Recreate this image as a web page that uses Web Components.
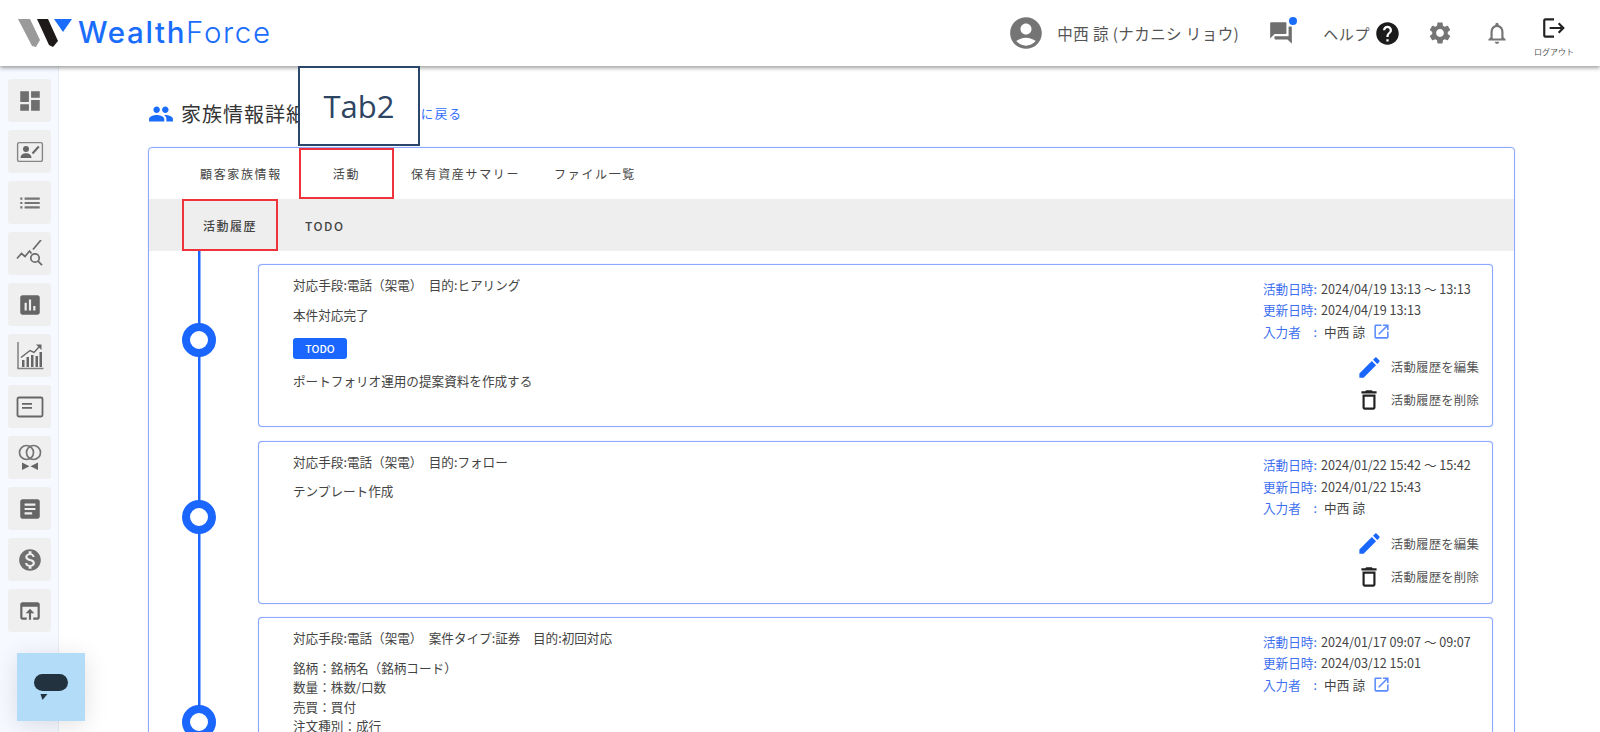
<!DOCTYPE html>
<html lang="ja">
<head>
<meta charset="utf-8">
<title>WealthForce</title>
<style>
  html, body { margin: 0; height: 732px; overflow: hidden; background: #fff; }
  body { font-family: "Noto Sans CJK JP", "Noto Sans", sans-serif; color: #444; }
</style>
</head>
<body>
<wf-app>
  <wf-header slot="header"></wf-header>
  <wf-sidebar slot="sidebar"></wf-sidebar>
  <wf-page-title link="一覧に戻る">家族情報詳細</wf-page-title>
  <wf-panel>
    <wf-tabs>
      <wf-tab>顧客家族情報</wf-tab>
      <wf-tab marked>活動</wf-tab>
      <wf-tab>保有資産サマリー</wf-tab>
      <wf-tab>ファイル一覧</wf-tab>
    </wf-tabs>
    <wf-subtabs>
      <wf-tab sub marked>活動履歴</wf-tab>
      <wf-tab sub>TODO</wf-tab>
    </wf-subtabs>
    <wf-timeline>
      <wf-activity heading="対応手段:電話（架電）　目的:ヒアリング" date="2024/04/19 13:13 ～ 13:13" updated="2024/04/19 13:13" link>
        <p>本件対応完了</p>
        <wf-badge>TODO</wf-badge>
        <p>ポートフォリオ運用の提案資料を作成する</p>
      </wf-activity>
      <wf-activity heading="対応手段:電話（架電）　目的:フォロー" date="2024/01/22 15:42 ～ 15:42" updated="2024/01/22 15:43">
        <p>テンプレート作成</p>
      </wf-activity>
      <wf-activity heading="対応手段:電話（架電）　案件タイプ:証券　目的:初回対応" date="2024/01/17 09:07 ～ 09:07" updated="2024/03/12 15:01" link tall>
        <p class="row">銘柄：銘柄名（銘柄コード）</p>
        <p class="row">数量：株数/口数</p>
        <p class="row">売買：買付</p>
        <p class="row">注文種別：成行</p>
      </wf-activity>
    </wf-timeline>
  </wf-panel>
  <wf-callout slot="overlay">Tab2</wf-callout>
  <wf-chat-button slot="overlay"></wf-chat-button>
</wf-app>

<script>
// material style icon paths, all on a 24 box
const ICONS = {
  dashboard: 'M3 13h8V3H3v10zm0 8h8v-6H3v6zm10 0h8V11h-8v10zm0-18v6h8V3h-8z',
  list: 'M3 13h2v-2H3v2zm0 4h2v-2H3v2zm0-8h2V7H3v2zm4 4h14v-2H7v2zm0 4h14v-2H7v2zM7 7v2h14V7H7z',
  assessment: 'M19 3H5c-1.1 0-2 .9-2 2v14c0 1.1.9 2 2 2h14c1.1 0 2-.9 2-2V5c0-1.1-.9-2-2-2zM9 17H7v-7h2v7zm4 0h-2V7h2v10zm4 0h-2v-4h2v4z',
  article: 'M19 3H5c-1.1 0-2 .9-2 2v14c0 1.1.9 2 2 2h14c1.1 0 2-.9 2-2V5c0-1.1-.9-2-2-2zm-5 14H7v-2h7v2zm3-4H7v-2h10v2zm0-4H7V7h10v2z',
  money: 'M12 2C6.48 2 2 6.48 2 12s4.48 10 10 10 10-4.48 10-10S17.52 2 12 2zm1.41 16.09V20h-2.67v-1.93c-1.71-.36-3.16-1.46-3.27-3.4h1.96c.1 1.05.82 1.87 2.65 1.87 1.96 0 2.4-.98 2.4-1.59 0-.83-.44-1.61-2.67-2.14-2.48-.6-4.18-1.62-4.18-3.67 0-1.72 1.39-2.84 3.11-3.21V4h2.67v1.95c1.86.45 2.79 1.86 2.85 3.39H14.3c-.05-1.11-.64-1.87-2.22-1.87-1.5 0-2.4.68-2.4 1.64 0 .84.65 1.39 2.67 1.91s4.18 1.39 4.18 3.91c-.01 1.83-1.38 2.83-3.12 3.16z',
  upload: 'M19 4H5c-1.11 0-2 .9-2 2v12c0 1.1.89 2 2 2h4v-2H5V8h14v10h-4v2h4c1.1 0 2-.9 2-2V6c0-1.1-.89-2-2-2zm-7 6l-4 4h3v6h2v-6h3l-4-4z',
  people: 'M16 11c1.66 0 2.99-1.34 2.99-3S17.66 5 16 5c-1.66 0-3 1.34-3 3s1.34 3 3 3zm-8 0c1.66 0 2.99-1.34 2.99-3S9.66 5 8 5C6.34 5 5 6.34 5 8s1.34 3 3 3zm0 2c-2.33 0-7 1.17-7 3.5V19h14v-2.5c0-2.33-4.67-3.5-7-3.5zm8 0c-.29 0-.62.02-.97.05 1.16.84 1.97 1.97 1.97 3.45V19h6v-2.5c0-2.33-4.67-3.5-7-3.5z',
  account: 'M12 2C6.48 2 2 6.48 2 12s4.48 10 10 10 10-4.48 10-10S17.52 2 12 2zm0 4c1.93 0 3.5 1.57 3.5 3.5S13.93 13 12 13s-3.5-1.57-3.5-3.5S10.07 6 12 6zm0 14c-2.03 0-4.43-.82-6.14-2.88C7.55 15.8 9.68 15 12 15s4.45.8 6.14 2.12C16.43 19.18 14.03 20 12 20z',
  forum: 'M21 6h-2v9H6v2c0 .55.45 1 1 1h11l4 4V7c0-.55-.45-1-1-1zm-4 6V3c0-.55-.45-1-1-1H3c-.55 0-1 .45-1 1v14l4-4h10c.55 0 1-.45 1-1z',
  help: 'M12 2C6.48 2 2 6.48 2 12s4.48 10 10 10 10-4.48 10-10S17.52 2 12 2zm1 17h-2v-2h2v2zm2.07-7.75l-.9.92C13.45 12.9 13 13.5 13 15h-2v-.5c0-1.1.45-2.1 1.17-2.83l1.24-1.26c.37-.36.59-.86.59-1.41 0-1.1-.9-2-2-2s-2 .9-2 2H8c0-2.21 1.79-4 4-4s4 1.79 4 4c0 .88-.36 1.68-.93 2.25z',
  settings: 'M19.14 12.94c.04-.3.06-.61.06-.94 0-.32-.02-.64-.07-.94l2.03-1.58c.18-.14.23-.41.12-.61l-1.92-3.32c-.12-.22-.37-.29-.59-.22l-2.39.96c-.5-.38-1.03-.7-1.62-.94l-.36-2.54c-.04-.24-.24-.41-.48-.41h-3.84c-.24 0-.43.17-.47.41l-.36 2.54c-.59.24-1.13.57-1.62.94l-2.39-.96c-.22-.08-.47 0-.59.22L2.74 8.87c-.12.21-.08.47.12.61l2.03 1.58c-.05.3-.09.63-.09.94s.02.64.07.94l-2.03 1.58c-.18.14-.23.41-.12.61l1.92 3.32c.12.22.37.29.59.22l2.39-.96c.5.38 1.03.7 1.62.94l.36 2.54c.05.24.24.41.48.41h3.84c.24 0 .44-.17.47-.41l.36-2.54c.59-.24 1.13-.56 1.62-.94l2.39.96c.22.08.47 0 .59-.22l1.92-3.32c.12-.22.07-.47-.12-.61l-2.01-1.58zM12 15.6c-1.98 0-3.6-1.62-3.6-3.6s1.62-3.6 3.6-3.6 3.6 1.62 3.6 3.6-1.62 3.6-3.6 3.6z',
  bell: 'M12 22c1.1 0 2-.9 2-2h-4c0 1.1.9 2 2 2zm6-6v-5c0-3.07-1.63-5.64-4.5-6.32V4c0-.83-.67-1.5-1.5-1.5s-1.5.67-1.5 1.5v.68C7.64 5.36 6 7.92 6 11v5l-2 2v1h16v-1l-2-2zm-2 1H8v-6c0-2.48 1.51-4.5 4-4.5s4 2.02 4 4.5v6z',
  logout: 'M17 7l-1.41 1.41L18.17 11H8v2h10.17l-2.58 2.58L17 17l5-5zM4 5h8V3H4c-1.1 0-2 .9-2 2v14c0 1.1.9 2 2 2h8v-2H4V5z',
  edit: 'M3 17.25V21h3.75L17.81 9.94l-3.75-3.75L3 17.25zM20.71 7.04c.39-.39.39-1.02 0-1.41l-2.34-2.34c-.39-.39-1.02-.39-1.41 0l-1.83 1.83 3.75 3.75 1.83-1.83z',
  trash: 'M6 19c0 1.1.9 2 2 2h8c1.1 0 2-.9 2-2V7H6v12zM8 9h8v10H8V9zm7.5-5l-1-1h-5l-1 1H5v2h14V4z',
  open: 'M19 19H5V5h7V3H5c-1.11 0-2 .9-2 2v14c0 1.1.89 2 2 2h14c1.1 0 2-.9 2-2v-7h-2v7zM14 3v2h3.59l-9.83 9.83 1.41 1.41L19 6.41V10h2V3h-7z'
};

function icon(name, size, color) {
  return `<svg width="${size}" height="${size}" viewBox="0 0 24 24" fill="${color}" style="display:block;flex:none"><path d="${ICONS[name]}"/></svg>`;
}

// the few sidebar icons that are not stock material shapes
const SIDE_CUSTOM = {
  contact: `<svg width="28" height="28" viewBox="0 0 28 28" style="display:block"><rect x="1.6" y="4.6" width="24.8" height="18.8" rx="1.5" fill="none" stroke="#858585" stroke-width="1.4"/><circle cx="10" cy="11" r="3" fill="#666"/><path d="M4.5 20c0-3.400 3-4.800 5.500-4.800s5.500 1.400 5.500 4.800z" fill="#666"/><path d="M16.500 15.500L22.800 8.500" stroke="#666" stroke-width="2"/></svg>`,
  stats: `<svg width="28" height="28" viewBox="0 0 28 28" fill="none" stroke="#6a6a6a" stroke-width="1.700" style="display:block"><path d="M1 18.500l4.500-5 3.500 3 4.500-5.500 2 2.500"/><path d="M17 9.500L25 0"/><circle cx="19" cy="18" r="4.200"/><path d="M22 21.200l4 4"/></svg>`,
  chart: `<svg width="28" height="30" viewBox="0 0 28 30" style="display:block"><path d="M2 1v26.500h25.500" fill="none" stroke="#808080" stroke-width="1.500"/><path d="M6 19h2.500v7H6zM10.500 16H13v10h-2.500zM15 14h2.500v12H15zM19.500 15H22v11h-2.500zM23.500 11H26v15h-2.500z" fill="#666"/><path d="M5 16.500L14 9.500l4 2 5-5.500" fill="none" stroke="#666" stroke-width="1.400"/><path d="M20 3.500h5.500V9z" fill="#666"/></svg>`,
  memo: `<svg width="28" height="28" viewBox="0 0 28 28" style="display:block"><rect x="1.500" y="4.500" width="25" height="19" rx="1.500" fill="none" stroke="#666" stroke-width="1.800"/><path d="M6 10h10v1.800H6zM6 14h10v1.800H6z" fill="#666"/></svg>`,
  rings: `<svg width="28" height="30" viewBox="0 0 28 30" fill="none" stroke="#757575" stroke-width="1.700" style="display:block"><circle cx="10.500" cy="9.500" r="7"/><circle cx="17.500" cy="9.500" r="7"/><path d="M6 19.500l7.500 3.800L6 27zM22 19.500l-7.500 3.800L22 27z" fill="#666" stroke="none"/></svg>`
};

class WfApp extends HTMLElement {
  constructor() {
    super();
    this.attachShadow({mode: 'open'}).innerHTML = `
      <style>
        :host { display: block; position: relative; width: 1600px; height: 732px; overflow: hidden; }
        .shell { display: grid; grid-template-rows: 66px 666px; grid-template-columns: 59px 1fr; height: 732px; }
        .top { grid-column: 1 / 3; position: relative; z-index: 2; }
        main { padding: 0 85px 0 89px; overflow: hidden; }
      </style>
      <div class="shell">
        <div class="top"><slot name="header"></slot></div>
        <slot name="sidebar"></slot>
        <main><slot></slot></main>
      </div>
      <slot name="overlay"></slot>`;
  }
}

class WfHeader extends HTMLElement {
  constructor() {
    super();
    this.attachShadow({mode: 'open'}).innerHTML = `
      <style>
        :host { display: flex; align-items: center; height: 66px; background: #fff; box-shadow: 0 2px 4px rgba(0,0,0,.38); }
        .logo { display: flex; align-items: center; margin-left: 17px; }
        .brand { margin-left: 5px; font: 300 29.500px/1 Inter, sans-serif; color: #1a6dfb; letter-spacing: 1.650px; white-space: nowrap; }
        .brand b { font-weight: 500; }
        .right { margin-left: auto; display: flex; align-items: center; }
        .user { font-size: 15.500px; color: #555; margin: 0 29px 0 12px; letter-spacing: .4px; white-space: nowrap; }
        .chat { position: relative; }
        .chat i { position: absolute; top: -3px; right: -3px; width: 8px; height: 8px; border-radius: 50%; background: #1a6dfb; }
        .help { font-size: 15px; color: #555; margin-left: 29px; margin-right: 4px; letter-spacing: .6px; }
        .out { display: flex; flex-direction: column; align-items: center; width: 42px; margin: 0 25px 0 23px; font-size: 8px; line-height: 10px; color: #555; white-space: nowrap; padding-top: 6px; }
        .out span { margin-top: 6px; }
        .gear { margin-left: 26px; }
        .bell { margin-left: 31px; }
      </style>
      <div class="logo">
        <svg width="56" height="30" viewBox="0 0 56 30" style="display:block">
          <path d="M1 1h12l10 21-4 7-4-1z" fill="#9a9a9a"/>
          <path d="M20 1h11l10 22-5 6-4-2z" fill="#1f1a1a"/>
          <path d="M37 1h18l-9 13z" fill="#1a6dfb"/>
        </svg>
        <div class="brand"><b>Wealth</b>Force</div>
      </div>
      <div class="right">
        ${icon('account', 38, '#757575')}
        <div class="user">中西 諒 (ナカニシ リョウ)</div>
        <div class="chat">${icon('forum', 26, '#6f6f6f')}<i></i></div>
        <div class="help">ヘルプ</div>
        ${icon('help', 27, '#1c1c1c')}
        <div class="gear">${icon('settings', 26, '#757575')}</div>
        <div class="bell">${icon('bell', 26, '#757575')}</div>
        <div class="out">${icon('logout', 26, '#222')}<span>ログアウト</span></div>
      </div>`;
  }
}

class WfSidebar extends HTMLElement {
  constructor() {
    super();
    const items = [
      icon('dashboard', 26, '#6f6f6f'), SIDE_CUSTOM.contact, icon('list', 26, '#757575'),
      SIDE_CUSTOM.stats, icon('assessment', 26, '#666'), SIDE_CUSTOM.chart, SIDE_CUSTOM.memo,
      SIDE_CUSTOM.rings, icon('article', 26, '#666'), icon('money', 26, '#6f6f6f'), icon('upload', 26, '#666')
    ];
    this.attachShadow({mode: 'open'}).innerHTML = `
      <style>
        :host { display: flex; flex-direction: column; gap: 8px; box-sizing: border-box; padding: 13px 8px 0; background: #f6f9ff; border-right: 1px solid #e8edf6; }
        div { width: 43px; height: 43px; flex: none; background: #efefef; border-radius: 3px; display: flex; align-items: center; justify-content: center; }
      </style>
      ${items.map(i => `<div>${i}</div>`).join('')}`;
  }
}

class WfPageTitle extends HTMLElement {
  constructor() {
    super();
    this.attachShadow({mode: 'open'}).innerHTML = `
      <style>
        :host { display: flex; align-items: center; height: 81px; box-sizing: border-box; padding-top: 14px; }
        h1 { margin: 0 0 0 7px; font-size: 20px; font-weight: 400; color: #333; letter-spacing: 1px; }
        a { margin-left: 86px; font-size: 12.500px; color: #2f6bff; letter-spacing: 1.400px; }
      </style>
      ${icon('people', 26, '#1a6dfb')}
      <h1><slot></slot></h1>
      <a>${this.getAttribute('link')}</a>`;
  }
}

class WfPanel extends HTMLElement {
  constructor() {
    super();
    this.attachShadow({mode: 'open'}).innerHTML = `
      <style>
        :host { display: block; border: 1px solid #8aa9ff; box-shadow: 0 0 1px #8aa9ff; border-radius: 4px; box-sizing: border-box; height: 800px; }
      </style>
      <slot></slot>`;
  }
}

class WfTabs extends HTMLElement {
  constructor() {
    super();
    this.attachShadow({mode: 'open'}).innerHTML = `
      <style>
        :host { display: flex; height: 51px; padding-left: 34px; align-items: stretch; }
      </style>
      <slot></slot>`;
  }
}

class WfSubtabs extends HTMLElement {
  constructor() {
    super();
    this.attachShadow({mode: 'open'}).innerHTML = `
      <style>
        :host { display: flex; height: 52px; padding-left: 33px; background: #eee; align-items: stretch; }
      </style>
      <slot></slot>`;
  }
}

class WfTab extends HTMLElement {
  constructor() {
    super();
    this.attachShadow({mode: 'open'}).innerHTML = `
      <style>
        :host { display: flex; align-items: center; justify-content: center; padding: 0 17px; font-size: 12px; letter-spacing: 1.650px; color: #444; box-sizing: border-box; white-space: nowrap; }
        :host([marked]) { outline: 2px solid #f0323c; outline-offset: -2px; min-width: 95px; }
        :host([sub]) { padding: 0 20px; margin-right: 7px; font-weight: 500; letter-spacing: 1.500px; }
        :host([sub][marked]) { min-width: 96px; }
      </style>
      <slot></slot>`;
  }
}

class WfTimeline extends HTMLElement {
  constructor() {
    super();
    this.attachShadow({mode: 'open'}).innerHTML = `
      <style>
        :host { display: block; padding: 13px 21px 0 0; background: linear-gradient(#1a66ff, #1a66ff) 49px 0 / 2.500px 100% no-repeat; }
      </style>
      <slot></slot>`;
  }
}

class WfActivity extends HTMLElement {
  constructor() {
    super();
    const linked = this.hasAttribute('link');
    this.attachShadow({mode: 'open'}).innerHTML = `
      <style>
        :host { display: grid; grid-template-columns: 100px 1fr; column-gap: 9px; padding-bottom: 13.500px; font-size: 12.600px; color: #444; }
        .rail { display: flex; justify-content: center; align-items: center; padding-bottom: 11px; }
        .dot { width: 34px; height: 34px; box-sizing: border-box; border: 8px solid #1a66ff; border-radius: 50%; background: #fff; }
        .card { display: flex; justify-content: space-between; box-sizing: border-box; height: 163px; padding: 11px 13px 14px 34px; border: 1px solid #8aa9ff; box-shadow: 0 0 1px #8aa9ff; border-radius: 4px; background: #fff; }
        :host([tall]) .card { height: 221px; }
        .head { line-height: 18px; margin-bottom: 11.500px; }
        :host([tall]) .head { margin-bottom: 12px; }
        .side { width: 216px; padding-top: 1.500px; flex: none; display: flex; flex-direction: column; }
        .meta { line-height: 21.500px; white-space: nowrap; display: flex; align-items: center; }
        .meta span { color: #3d6ff0; width: 58px; flex: none; }
        .ext { margin-left: 7px; }
        .acts { margin-top: auto; display: flex; flex-direction: column; gap: 9px; }
        .act { display: flex; align-items: center; justify-content: flex-end; height: 24px; font-size: 12.400px; letter-spacing: .200px; color: #555; }
        .act svg { margin-right: 9px; }
        .act svg.pen { margin-right: 8px; }
        .name { margin-left: 3px; letter-spacing: .200px; }
        ::slotted(p) { margin: 0 0 14px; line-height: 18px; }
        ::slotted(p.row) { margin: 0 0 1.300px; }
      </style>
      <div class="rail"><div class="dot"></div></div>
      <div class="card">
        <div>
          <div class="head">${this.getAttribute('heading')}</div>
          <slot></slot>
        </div>
        <div class="side">
          <div class="meta"><span>活動日時:</span>${this.getAttribute('date')}</div>
          <div class="meta"><span>更新日時:</span>${this.getAttribute('updated')}</div>
          <div class="meta"><span>入力者　:</span><div class="name">中西 諒</div>${linked ? `<div class="ext">${icon('open', 19, '#5b8cff')}</div>` : ''}</div>
          <div class="acts">
            <div class="act">${icon('edit', 27, '#1a66ff').replace('<svg', '<svg class="pen"')}活動履歴を編集</div>
            <div class="act">${icon('trash', 26, '#222')}活動履歴を削除</div>
          </div>
        </div>
      </div>`;
  }
}

class WfBadge extends HTMLElement {
  constructor() {
    super();
    this.attachShadow({mode: 'open'}).innerHTML = `
      <style>
        :host { display: flex; width: 54px; height: 21px; margin: 0 0 13px; align-items: center; justify-content: center; background: #1a66ff; color: #fff; font-size: 10.500px; font-weight: 500; border-radius: 3px; }
      </style>
      <slot></slot>`;
  }
}

class WfCallout extends HTMLElement {
  constructor() {
    super();
    this.attachShadow({mode: 'open'}).innerHTML = `
      <style>
        :host { position: absolute; left: 298px; top: 66px; width: 122px; height: 80px; box-sizing: border-box; z-index: 3; display: flex; align-items: center; justify-content: center; background: #fff; border: 2px solid #2a4668; color: #2d4563; font: 400 31px "Open Sans", sans-serif; }
      </style>
      <slot></slot>`;
  }
}

class WfChatButton extends HTMLElement {
  constructor() {
    super();
    this.attachShadow({mode: 'open'}).innerHTML = `
      <style>
        :host { position: absolute; left: 17px; top: 653px; width: 68px; height: 68px; z-index: 3; background: #b3dcf8; box-shadow: 0 4px 24px rgba(0,0,0,.12); display: flex; align-items: center; justify-content: center; }
      </style>
      <svg width="36" height="28" viewBox="0 0 36 28" style="display:block">
        <rect x="1" y="1" width="34" height="17" rx="8.500" fill="#22333f"/>
        <path d="M7.500 21h7l-5 6z" fill="#22333f"/>
      </svg>`;
  }
}

customElements.define('wf-app', WfApp);
customElements.define('wf-header', WfHeader);
customElements.define('wf-sidebar', WfSidebar);
customElements.define('wf-page-title', WfPageTitle);
customElements.define('wf-panel', WfPanel);
customElements.define('wf-tabs', WfTabs);
customElements.define('wf-subtabs', WfSubtabs);
customElements.define('wf-tab', WfTab);
customElements.define('wf-timeline', WfTimeline);
customElements.define('wf-activity', WfActivity);
customElements.define('wf-badge', WfBadge);
customElements.define('wf-callout', WfCallout);
customElements.define('wf-chat-button', WfChatButton);
</script>
</body>
</html>
